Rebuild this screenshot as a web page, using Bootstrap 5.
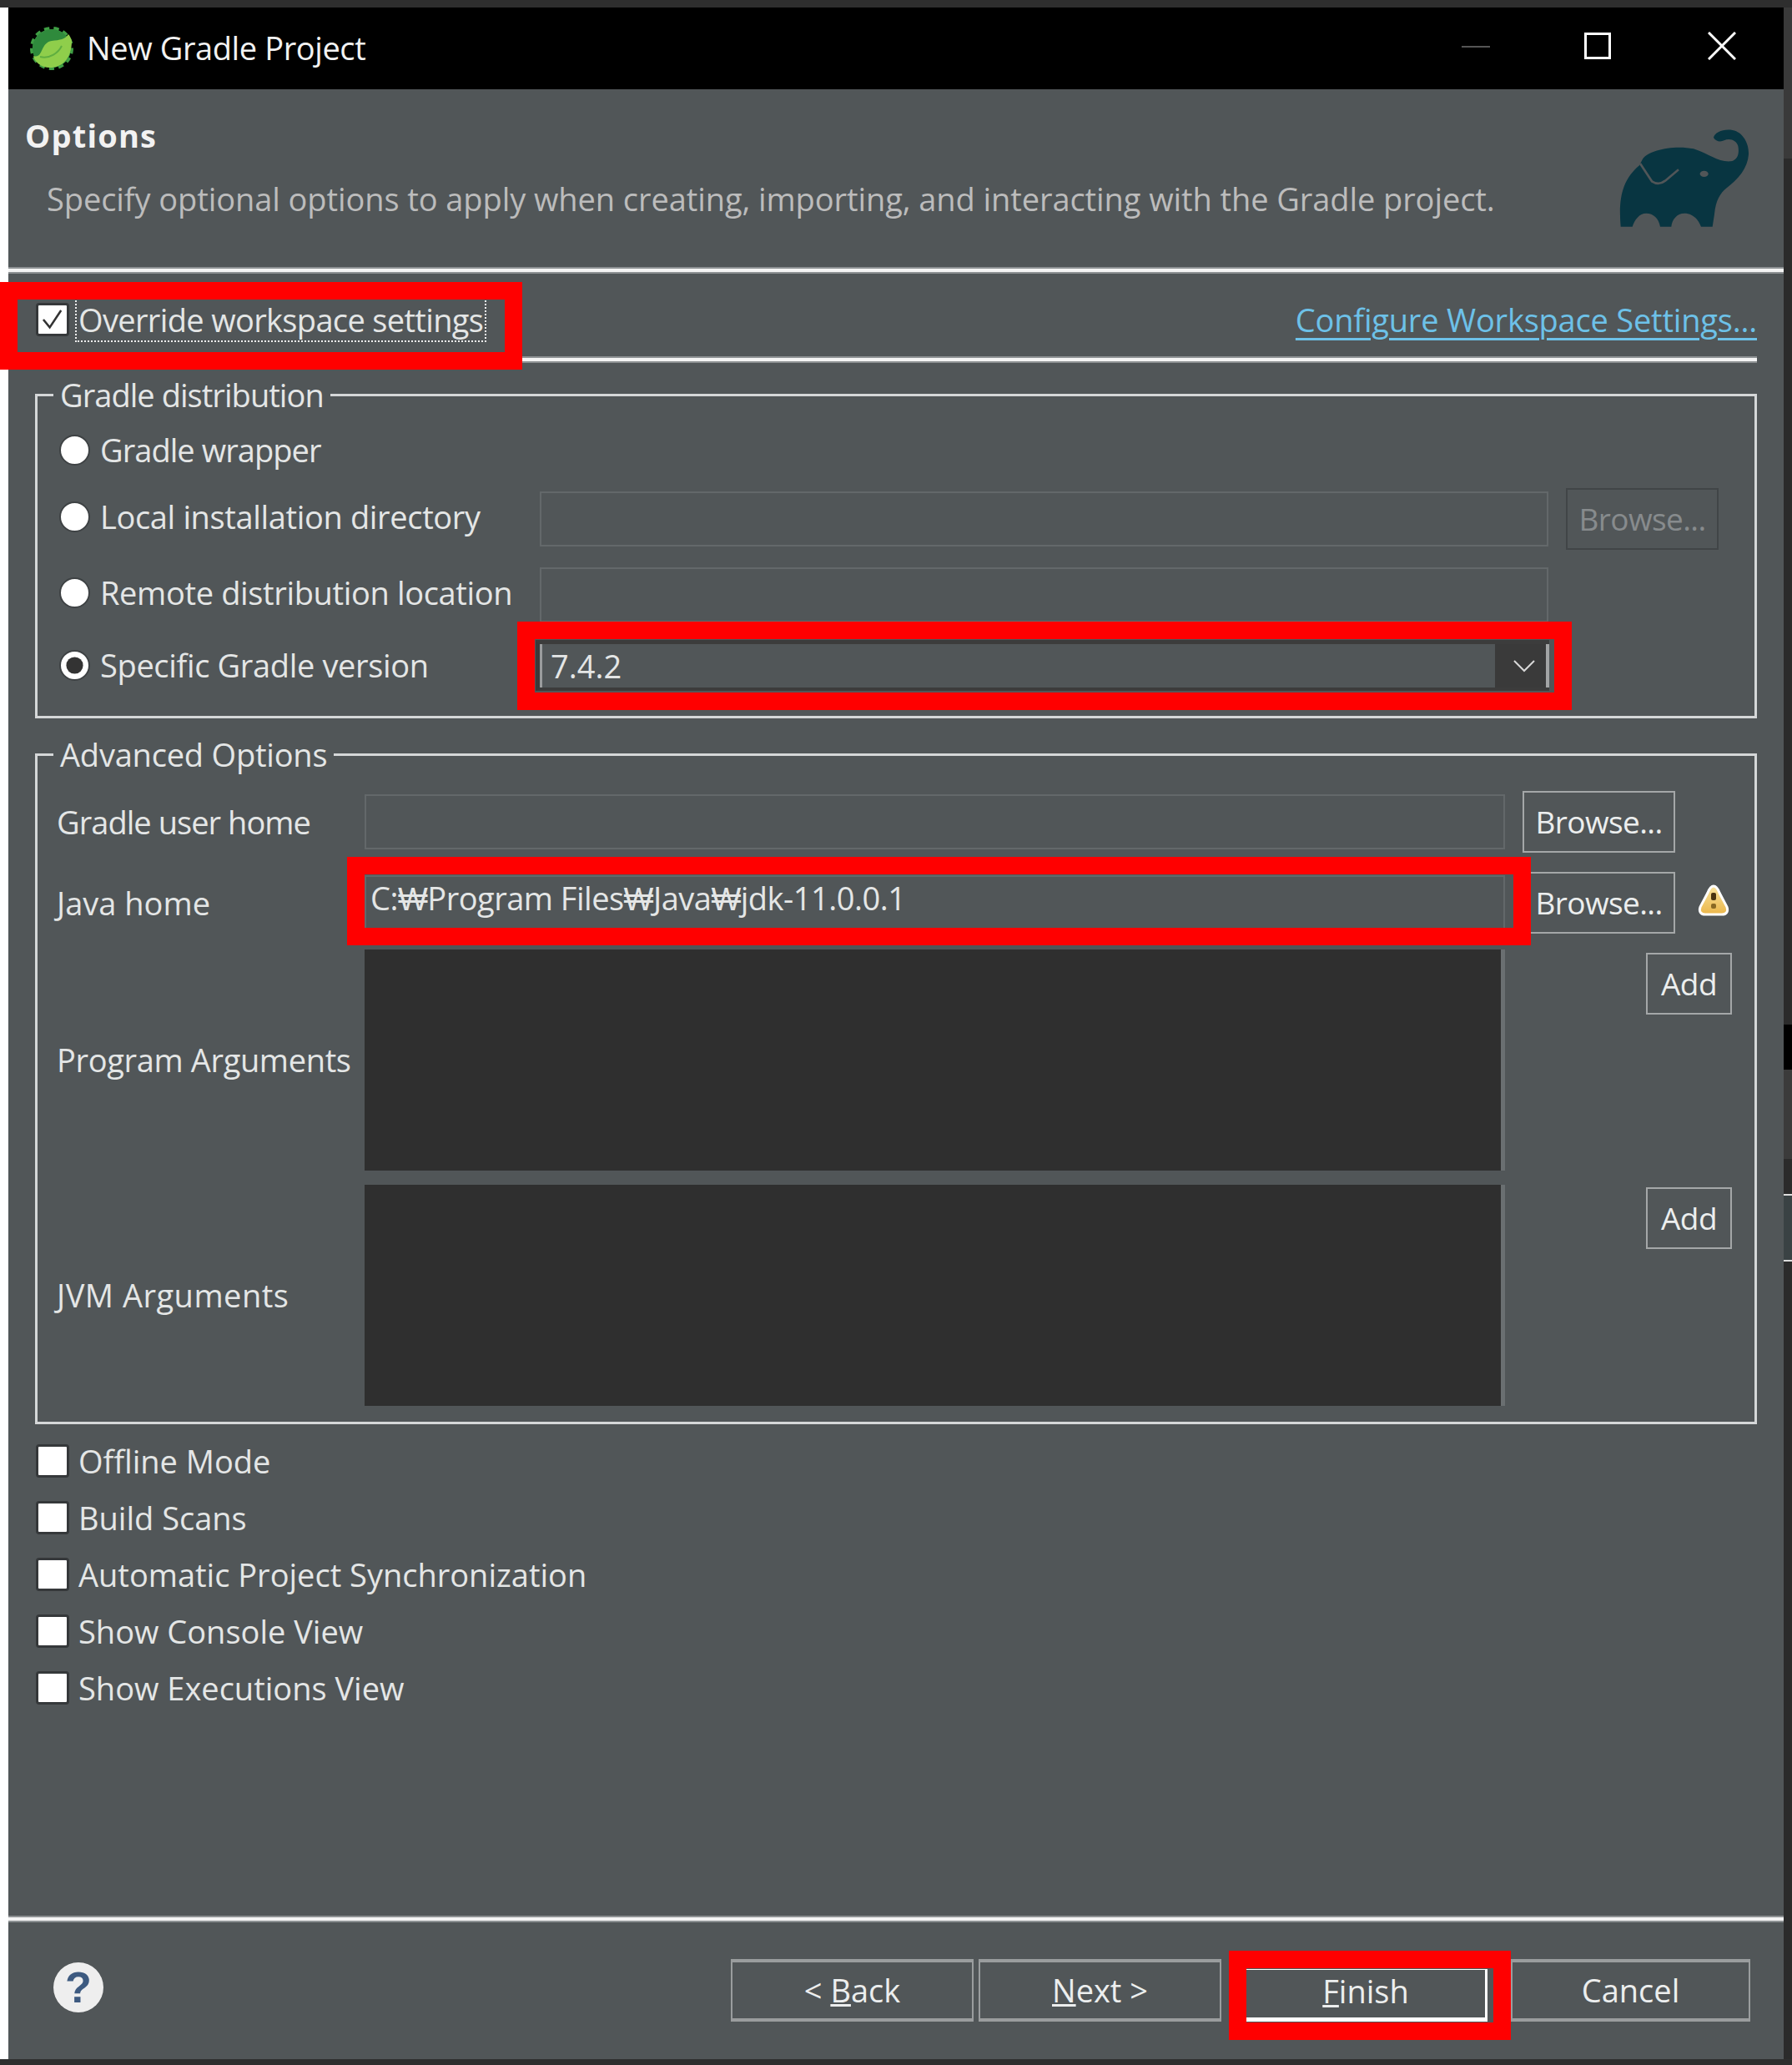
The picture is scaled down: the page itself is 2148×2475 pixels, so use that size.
<!DOCTYPE html>
<html lang="en">

<head>
    <title>New Gradle Project</title>
    <meta charset="utf-8">
    <meta name="viewport" content="width=device-width, initial-scale=1">
    <link href="https://cdn.jsdelivr.net/npm/bootstrap@5.3.3/dist/css/bootstrap.min.css" rel="stylesheet">
    <script src="https://cdn.jsdelivr.net/npm/bootstrap@5.3.3/dist/js/bootstrap.bundle.min.js"></script>
    <style>
        html, body { margin: 0; background: #fff; }

        body {
            width: 2148px;
            height: 2475px;
            overflow: hidden;
            font-family: "Open Sans", "Liberation Sans", sans-serif;
            font-size: 38px;
            letter-spacing: 0;
            color: #e4e6e6;
        }

        .page-wrap { width: 2148px; height: 2475px; }
        .top-strip { height: 9px; background: #2e2e2e; }
        .bottom-strip { height: 7px; background: #2e2e2e; }
        .shell { height: 2459px; }
        .left-strip { width: 10px; background: #fff; }
        .right-strip { width: 10px; background: #2b2b2b; }
        .seg-a { height: 181px; background: #3a3a3a; }
        .seg-b { height: 1038px; }
        .seg-c { height: 54px; background: #000; }
        .seg-d { height: 107px; background: #3b3b3b; }
        .seg-e { height: 42px; }
        .seg-f { height: 81px; background: #3a4244; border-top: 2px solid #ddd; border-bottom: 2px solid #ddd; }

        .dlg { width: 2128px; background: #515658; }

        .tight-a { letter-spacing: -0.95px; }
        .tight-b { letter-spacing: -0.35px; }
        .loose-a { letter-spacing: 0.5px; }

        /* title bar */
        .title-bar { height: 98px; background: #000; color: #f2f2f2; padding-left: 26px; }
        .title-text { margin-left: 16px; margin-bottom: 2px; font-size: 38px; letter-spacing: -0.4px; }
        .win-min { width: 34px; height: 2px; background: #555; margin-bottom: 4px; }
        .win-max { width: 32px; height: 32px; border: 3px solid #fff; margin-left: 113px; margin-bottom: 6px; }
        .win-close { margin-left: 116px; margin-right: 57px; margin-bottom: 6px; }

        /* banner */
        .banner { height: 213px; }
        .banner-title { font-weight: 700; padding-left: 20px; padding-top: 27px; height: 85px; color: #f2f2f2; letter-spacing: 1.2px; }
        .banner-desc { padding-left: 46px; margin-top: 18px; color: #bcbcbc; letter-spacing: -0.08px; }
        .banner-logo { margin-top: 33px; margin-right: 18px; }

        .sep-line { height: 8px; background: #f4f4f4; border-top: 2px solid #8d9193; border-bottom: 2px solid #8d9193; }

        /* override row */
        .override-row { height: 99px; padding: 11px 32px 0 33px; }
        .focus-text { outline: 2px dotted #eee; outline-offset: 0; margin-left: 9px; padding: 0 2px; line-height: 50px; letter-spacing: -0.65px; }
        .conf-link { color: #6dc1e8; letter-spacing: -0.2px; text-decoration-thickness: 3px; text-underline-offset: 7px; }
        .override-sep { margin-right: 32px; }

        /* group boxes */
        .grp-box {
            margin: 13px 32px 0;
            padding: 0 0 0 26px;
            border: 3px solid #d5d7d8;
            min-width: 0;
        }

        .grp-box legend {
            float: none;
            width: auto;
            margin: 0 0 0 -7px;
            padding: 0 8px;
            font-size: 38px;
            line-height: 50px;
        }

        .grp-adv { margin-top: 18px; padding-left: 23px; }
        .grp-box.grp-adv legend { margin-left: -4px; letter-spacing: -0.2px; }

        .opt-label { width: 576px; flex: none; }
        .raise-label { margin-bottom: 5px; }
        .adv-label { width: 369px; flex: none; }
        .radio-gap { margin-left: 12px; }

        .form-check-input.tool-check,
        .form-check-input.tool-radio {
            width: 37px;
            height: 37px;
            margin: 0;
            flex: none;
            background-color: #fff;
            box-shadow: none;
        }

        .form-check-input.tool-check {
            width: 40px;
            height: 40px;
            border: 3px solid #35383a;
            border-radius: 4px;
        }

        .form-check-input.tool-check:checked {
            background-image: url("data:image/svg+xml,%3csvg xmlns='http://www.w3.org/2000/svg' viewBox='0 0 40 40'%3e%3cpath fill='none' stroke='%23333' stroke-width='3' d='M7 20l9 11L32 7'/%3e%3c/svg%3e");
            background-size: 100% 100%;
        }

        .form-check-input.tool-radio { border: 2px solid #3e4244; }

        .form-check-input.tool-radio:checked {
            background-image: url("data:image/svg+xml,%3csvg xmlns='http://www.w3.org/2000/svg' viewBox='0 0 36 36'%3e%3ccircle cx='18' cy='18' r='11' fill='%23333'/%3e%3c/svg%3e");
            background-size: 100% 100%;
        }

        .form-control.tool-input {
            height: 66px;
            padding: 0 5px;
            background: transparent;
            border: 2px solid #63686a;
            border-radius: 0;
            color: #e4e6e6;
            font-size: 38px;
            letter-spacing: -0.5px;
            box-shadow: none;
        }

        .form-control.java-input { padding-bottom: 12px; }

        .form-control.arg-box {
            height: 265px;
            background: #2f2f2f;
            border: 0;
            border-right: 5px solid #6a6f71;
            border-radius: 0;
            resize: none;
        }

        .btn.tool-btn {
            --bs-btn-padding-x: 0;
            --bs-btn-padding-y: 0;
            height: 74px;
            background: transparent;
            border: 2px solid #a4a7a8;
            border-radius: 0;
            color: #eceeee;
            font-size: 37px;
            letter-spacing: -0.6px;
        }

        .btn.tool-btn:disabled { border-color: #414547; color: #878b8d; opacity: 1; }
        .browse-btn { width: 183px; margin-left: 21px; }
        .add-btn { width: 103px; margin-left: 169px; }
        .add-first { margin-top: 4px; }
        .add-second { margin-top: 3px; }

        /* rows of the distribution box */
        .dist-a { height: 80px; padding-top: 2px; }
        .dist-b { height: 66px; margin-top: 11px; }
        .dist-c { height: 66px; margin-top: 25px; }
        .dist-d { height: 61px; margin-top: 21px; margin-bottom: 30px; }

        /* rows of the advanced box */
        .adv-a { height: 66px; margin-top: 23px; }
        .adv-b { height: 66px; margin-top: 31px; }
        .adv-c { height: 265px; margin-top: 23px; }
        .adv-d { height: 265px; margin-top: 17px; margin-bottom: 19px; }
        .adv-input { width: 1367px; flex: none; }
        .dist-input { width: 1209px; flex: none; }
        .warn-icon { margin-left: 26px; margin-bottom: 6px; }

        .combo-box {
            width: 1215px;
            height: 61px;
            margin-left: -5px;
            flex: none;
            border-left: 5px solid #3a3a3a;
            border-top: 5px solid #3c3c3c;
            border-bottom: 4px solid #3c3c3c;
        }

        .combo-val { flex: 1; padding-left: 10px; border-left: 3px solid #9a9c9d; line-height: 52px; }
        .combo-arrow { width: 61px; padding-left: 8px; background: #3a3a3a; }
        .combo-edge { width: 4px; background: #a2a4a5; }

        /* option check boxes */
        .opts-list { margin: 10px 0 0 33px; }
        .opt-row { height: 68px; }
        .opt-text { margin-left: 11px; }

        /* footer */
        .foot-row { padding: 44px 40px 45px 54px; }
        .help-dot {
            width: 60px;
            height: 60px;
            margin-top: 4px;
            border-radius: 50%;
            background: #eeeeee;
            color: #3d5a80;
            font-family: "Liberation Sans", sans-serif;
            font-size: 52px;
            font-weight: 700;
            letter-spacing: 0;
        }

        .btn.foot-btn {
            width: 291px;
            height: 75px;
            border-width: 4px 2px 4px 2px;
            border-color: #9a9d9e;
            font-size: 38px;
            letter-spacing: 0;
        }

        .foot-btn + .foot-btn { margin-left: 6px; }
        .btn.finish-btn { width: 290px; height: 63px; margin-left: 29px; padding-bottom: 8px; border-width: 1px 3px 5px 1px; border-color: #fff; font-size: 38px; line-height: 44px; letter-spacing: 0; }
        .btn.cancel-btn { width: 287px; margin-left: 28px; }

        /* red marks drawn over the dialog */
        .red-mark { position: absolute; border: 21px solid #f00; }
        .mark-a { left: 0; top: 338px; width: 626px; height: 105px; }
        .mark-b { left: 620px; top: 745px; width: 1264px; height: 106px; }
        .mark-c { left: 416px; top: 1027px; width: 1419px; height: 106px; }
        .mark-d { left: 1473px; top: 2338px; width: 338px; height: 107px; }
    </style>
</head>

<body>

    <div class="page-wrap position-relative">
        <div class="top-strip"></div>

        <div class="shell d-flex">
            <div class="left-strip"></div>

            <div class="dlg d-flex flex-column">
                <!-- Title bar -->
                <div class="title-bar d-flex align-items-center">
                    <svg width="52" height="54" viewBox="0 0 52 54">
                        <circle cx="26" cy="27" r="23" fill="#3f9e44" stroke="#3f9e44" stroke-width="6" stroke-dasharray="6 5"></circle>
                        <circle cx="26" cy="27" r="23" fill="#2f8a3c"></circle>
                        <path d="M50 18C50 40 38 50 24 50C12 50 5 42 4 36C16 40 12 20 26 18C36 17 42 16 46 10C48 12 49 15 50 18Z" fill="#8fce4b"></path>
                        <path d="M12 37C24 40 34 32 38 24" fill="none" stroke="#5fae40" stroke-width="2"></path>
                    </svg>
                    <span class="title-text">New Gradle Project</span>
                    <div class="win-min ms-auto"></div>
                    <div class="win-max"></div>
                    <svg class="win-close" width="34" height="34" viewBox="0 0 34 34">
                        <path d="M1 1L33 33M33 1L1 33" stroke="#fff" stroke-width="3" fill="none"></path>
                    </svg>
                </div>

                <!-- Banner -->
                <div class="banner d-flex justify-content-between">
                    <div>
                        <div class="banner-title">Options</div>
                        <div class="banner-desc">Specify optional options to apply when creating, importing, and interacting with the Gradle project.</div>
                    </div>
                    <svg class="banner-logo" width="200" height="145" viewBox="0 0 600 435">
                        <path d="M68 395C60 300 70 230 135 175L148 150C170 120 260 100 330 115C380 130 420 165 465 160C490 155 495 130 490 105C485 85 460 75 440 85C425 92 410 88 402 75C405 55 440 42 470 48C510 55 530 100 528 135C525 185 490 225 450 255C425 275 410 300 405 350L398 395H357C345 365 325 347 297 347C270 347 252 370 250 395H210C205 365 185 347 160 347C135 347 118 370 110 395Z" fill="#083541"></path>
                        <path d="M138 168L180 232Q205 248 228 230L276 190" fill="none" stroke="#515658" stroke-width="8"></path>
                        <ellipse cx="368" cy="205" rx="15" ry="11" fill="#515658"></ellipse>
                    </svg>
                </div>

                <div class="sep-line"></div>

                <!-- Override -->
                <div class="override-row d-flex align-items-center justify-content-between">
                    <div class="d-flex align-items-center">
                        <input class="form-check-input tool-check" type="checkbox" checked>
                        <span class="focus-text">Override workspace settings</span>
                    </div>
                    <a href="#" class="conf-link">Configure Workspace Settings...</a>
                </div>
                <div class="sep-line override-sep"></div>

                <!-- Gradle distribution -->
                <fieldset class="grp-box">
                    <legend class="tight-a">Gradle distribution</legend>
                    <div class="dist-a d-flex align-items-center">
                        <input class="form-check-input tool-radio" type="radio" name="dist">
                        <span class="radio-gap tight-a">Gradle wrapper</span>
                    </div>
                    <div class="dist-b d-flex align-items-center">
                        <div class="opt-label raise-label d-flex align-items-center">
                            <input class="form-check-input tool-radio" type="radio" name="dist">
                            <span class="radio-gap tight-b">Local installation directory</span>
                        </div>
                        <input class="form-control tool-input dist-input" type="text" disabled>
                        <button type="button" class="btn tool-btn browse-btn" disabled>Browse...</button>
                    </div>
                    <div class="dist-c d-flex align-items-center">
                        <div class="opt-label raise-label d-flex align-items-center">
                            <input class="form-check-input tool-radio" type="radio" name="dist">
                            <span class="radio-gap tight-b">Remote distribution location</span>
                        </div>
                        <input class="form-control tool-input dist-input" type="text" disabled>
                    </div>
                    <div class="dist-d d-flex align-items-center">
                        <div class="opt-label d-flex align-items-center">
                            <input class="form-check-input tool-radio" type="radio" name="dist" checked>
                            <span class="radio-gap tight-b">Specific Gradle version</span>
                        </div>
                        <div class="combo-box d-flex">
                            <div class="combo-val">7.4.2</div>
                            <div class="combo-arrow d-flex align-items-center justify-content-center">
                                <svg width="26" height="16" viewBox="0 0 26 16">
                                    <path d="M1 2L13 14L25 2" fill="none" stroke="#d8d8d8" stroke-width="2"></path>
                                </svg>
                            </div>
                            <div class="combo-edge"></div>
                        </div>
                    </div>
                </fieldset>

                <!-- Advanced options -->
                <fieldset class="grp-box grp-adv">
                    <legend>Advanced Options</legend>
                    <div class="adv-a d-flex align-items-center">
                        <div class="adv-label tight-a">Gradle user home</div>
                        <input class="form-control tool-input adv-input" type="text" disabled>
                        <button type="button" class="btn tool-btn browse-btn">Browse...</button>
                    </div>
                    <div class="adv-b d-flex align-items-center">
                        <div class="adv-label">Java home</div>
                        <input class="form-control tool-input java-input adv-input" type="text" value="C:₩Program Files₩Java₩jdk-11.0.0.1" readonly>
                        <button type="button" class="btn tool-btn browse-btn">Browse...</button>
                        <svg class="warn-icon" width="40" height="40" viewBox="0 0 40 40">
                            <defs>
                                <linearGradient id="warnFill" x1="0" y1="0" x2="0" y2="1">
                                    <stop offset="0" stop-color="#f9e39c"></stop>
                                    <stop offset="1" stop-color="#eab64a"></stop>
                                </linearGradient>
                            </defs>
                            <path d="M20 3C23 3 25 6 27 11L36 28C38 34 35 37 30 37H10C5 37 2 34 4 28L13 11C15 6 17 3 20 3Z" fill="url(#warnFill)" stroke="#fff" stroke-width="3"></path>
                            <rect x="17" y="11" width="6" height="9" rx="2" fill="#4a3410"></rect>
                            <rect x="17" y="24" width="6" height="6" rx="2" fill="#8a6a24"></rect>
                        </svg>
                    </div>
                    <div class="adv-c d-flex align-items-center">
                        <div class="adv-label tight-b">Program Arguments</div>
                        <textarea class="form-control arg-box adv-input"></textarea>
                        <button type="button" class="btn tool-btn add-btn add-first align-self-start">Add</button>
                    </div>
                    <div class="adv-d d-flex align-items-center">
                        <div class="adv-label loose-a">JVM Arguments</div>
                        <textarea class="form-control arg-box adv-input"></textarea>
                        <button type="button" class="btn tool-btn add-btn add-second align-self-start">Add</button>
                    </div>
                </fieldset>

                <!-- Option checks -->
                <div class="opts-list">
                    <div class="opt-row d-flex align-items-center">
                        <input class="form-check-input tool-check" type="checkbox">
                        <span class="opt-text">Offline Mode</span>
                    </div>
                    <div class="opt-row d-flex align-items-center">
                        <input class="form-check-input tool-check" type="checkbox">
                        <span class="opt-text">Build Scans</span>
                    </div>
                    <div class="opt-row d-flex align-items-center">
                        <input class="form-check-input tool-check" type="checkbox">
                        <span class="opt-text">Automatic Project Synchronization</span>
                    </div>
                    <div class="opt-row d-flex align-items-center">
                        <input class="form-check-input tool-check" type="checkbox">
                        <span class="opt-text">Show Console View</span>
                    </div>
                    <div class="opt-row d-flex align-items-center">
                        <input class="form-check-input tool-check" type="checkbox">
                        <span class="opt-text">Show Executions View</span>
                    </div>
                </div>

                <!-- Footer -->
                <div class="mt-auto">
                    <div class="sep-line"></div>
                    <div class="foot-row d-flex">
                        <div class="help-dot d-flex align-items-center justify-content-center">?</div>
                        <div class="ms-auto d-flex">
                            <button type="button" class="btn tool-btn foot-btn">&lt; <u>B</u>ack</button>
                            <button type="button" class="btn tool-btn foot-btn"><u>N</u>ext &gt;</button>
                            <button type="button" class="btn tool-btn finish-btn align-self-end"><u>F</u>inish</button>
                            <button type="button" class="btn tool-btn foot-btn cancel-btn">Cancel</button>
                        </div>
                    </div>
                </div>
            </div>

            <div class="right-strip">
                <div class="seg-a"></div>
                <div class="seg-b"></div>
                <div class="seg-c"></div>
                <div class="seg-d"></div>
                <div class="seg-e"></div>
                <div class="seg-f"></div>
            </div>
        </div>

        <div class="bottom-strip"></div>

        <!-- Red marks -->
        <div class="red-mark mark-a"></div>
        <div class="red-mark mark-b"></div>
        <div class="red-mark mark-c"></div>
        <div class="red-mark mark-d"></div>
    </div>

</body>

</html>
